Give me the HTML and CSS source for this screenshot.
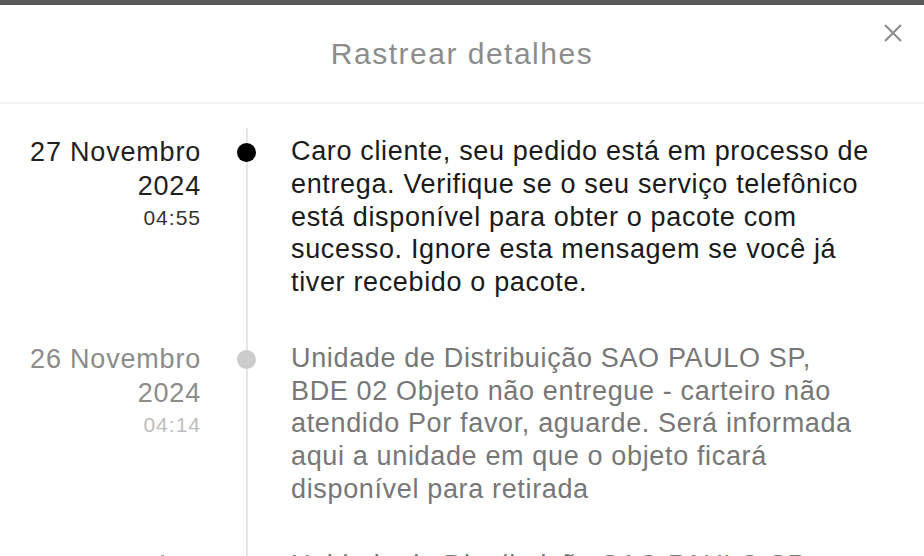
FILE: index.html
```html
<!DOCTYPE html>
<html lang="pt-BR">
<head>
    <meta charset="utf-8">
    <title>Rastrear detalhes</title>
    <link rel="stylesheet" href="styles.css">
</head>
<body>
    <div class="topbar"></div>
    <div class="modal">
        <div class="modal-header">
            <h1 class="modal-title">Rastrear detalhes</h1>
            <button class="close-btn" aria-label="Fechar">
                <svg width="20" height="20" viewBox="0 0 20 20"><path d="M2 2 L18 18 M18 2 L2 18" stroke="#8a8a8a" stroke-width="2" fill="none"/></svg>
            </button>
        </div>

        <div class="timeline">
            <div class="event current">
                <div class="event-date">
                    <div>27 Novembro</div>
                    <div>2024</div>
                    <div class="event-time">04:55</div>
                </div>
                <div class="event-mark"><span class="dot"></span></div>
                <div class="event-text">Caro cliente, seu pedido está em processo de entrega. Verifique se o seu serviço telefônico está disponível para obter o pacote com sucesso. Ignore esta mensagem se você já tiver recebido o pacote.</div>
            </div>

            <div class="event">
                <div class="event-date">
                    <div>26 Novembro</div>
                    <div>2024</div>
                    <div class="event-time">04:14</div>
                </div>
                <div class="event-mark"><span class="dot"></span></div>
                <div class="event-text">Unidade de Distribuição SAO PAULO SP, BDE 02 Objeto não entregue - carteiro não atendido Por favor, aguarde. Será informada aqui a unidade em que o objeto ficará disponível para retirada</div>
            </div>

            <div class="event">
                <div class="event-date">
                    <div>25 Novembro</div>
                    <div>2024</div>
                    <div class="event-time">18:02</div>
                </div>
                <div class="event-mark"><span class="dot"></span></div>
                <div class="event-text">Unidade de Distribuição SAO PAULO SP, BDE 02 Objeto saiu para entrega ao destinatário</div>
            </div>
        </div>
    </div>
</body>
</html>
```

FILE: styles.css
```css
body {
    margin: 0;
    background: #fff;
    font-family: "Liberation Sans", Arial, sans-serif;
    overflow: hidden;
}
.topbar {
    height: 5px;
    background: #595959;
}
.modal {
    background: #fff;
}
.modal-header {
    display: flex;
    justify-content: center;
    align-items: center;
    height: 97px;
    border-bottom: 2px solid #f2f2f2;
    position: relative;
}
.modal-title {
    margin: 0;
    font-size: 30px;
    font-weight: normal;
    color: #8c8c8c;
    letter-spacing: 1.5px;
}
.close-btn {
    position: absolute;
    top: 18px;
    right: 21px;
    border: 0;
    background: none;
    padding: 0;
    width: 20px;
    height: 20px;
}
.timeline {
    margin-top: 24px;
    background: linear-gradient(#e6e6e6, #e6e6e6) no-repeat 246px 0 / 2px 100%;
}
.event {
    display: grid;
    grid-template-columns: 201px 90px 1fr;
    padding: 7px 52px 36px 0;
    font-size: 27px;
    line-height: 32.75px;
}
.event-date {
    text-align: right;
    color: #8c8c8c;
    letter-spacing: 0.8px;
    line-height: 34px;
}
.event-time {
    font-size: 21px;
    line-height: 30px;
    letter-spacing: 1px;
    color: #bdbdbd;
}
.event-mark {
    display: flex;
    justify-content: center;
    align-items: flex-start;
}
.dot {
    width: 19px;
    height: 19px;
    margin-top: 8px;
    border-radius: 50%;
    background: #cccccc;
}
.event-text {
    color: #777;
    letter-spacing: 0.65px;
}
.current .event-date {
    color: #1f1f1f;
}
.current .event-time {
    color: #333;
}
.current .dot {
    background: #000;
}
.current .event-text {
    color: #1a1a1a;
}
```
